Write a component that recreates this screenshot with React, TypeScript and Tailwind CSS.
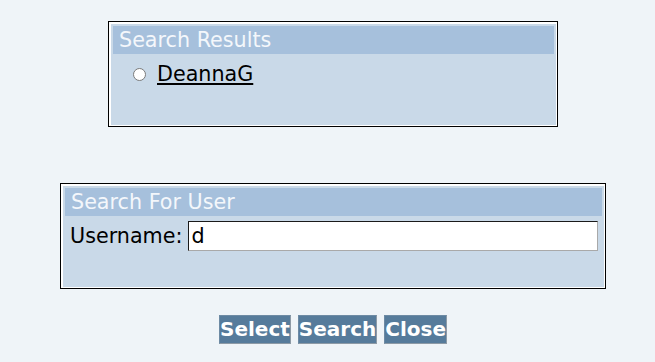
import { useState } from 'react'

const font = { fontFamily: '"DejaVu Sans", Verdana, sans-serif' }

function Header({ title }: { title: string }) {
  return (
    <div className="h-[28px] bg-[#a6c0dc] text-[#f4f7fb] text-[20.7px] leading-[23px] px-[6px] flex items-center">
      {title}
    </div>
  )
}

export default function App() {
  const [username, setUsername] = useState('d')

  return (
    <div className="min-h-[362px] bg-[#eff4f8] text-black pl-[11px]" style={font}>
      <div className="flex flex-col items-center pt-[21px]">
        {/* results */}
        <div className="w-[450px] h-[106px] border border-black bg-white pt-[2px] pl-[2px] pr-px pb-px">
          <div className="h-full bg-[#c9d9e8] p-[2px]">
            <Header title="Search Results" />
            <div className="flex items-center mt-[9px] pl-[20px] text-[20.7px] leading-[23px]">
              <span className="w-[13px] h-[13px] rounded-full border border-[#7a7a7a] bg-white" />
              <a href="#" className="ml-[11px] underline text-black">
                DeannaG
              </a>
            </div>
          </div>
        </div>

        {/* search form */}
        <div className="mt-[56px] w-[546px] h-[106px] border border-black bg-white pt-[2px] pl-[2px] pr-px pb-px">
          <div className="h-full bg-[#c9d9e8] p-[2px]">
            <Header title="Search For User" />
            <div className="flex items-center mt-[5px] pl-[5px] text-[20.7px] leading-[23px]">
              <label htmlFor="username">Username:</label>
              <input
                id="username"
                value={username}
                onChange={(e) => setUsername(e.target.value)}
                className="ml-[6px] w-[410px] h-[30px] bg-white border border-t-[#1a1a1a] border-l-[#1a1a1a] border-r-[#a9a9a9] border-b-[#a9a9a9] px-[2px] text-[20.7px] outline-none"
                style={font}
              />
            </div>
          </div>
        </div>

        {/* buttons */}
        <div className="mt-[26px] flex gap-[7px]">
          {['Select', 'Search', 'Close'].map((label) => (
            <button
              key={label}
              className="bg-[#567b9b] text-white font-bold text-[20px] leading-[23px] py-[2px] px-0 border border-t-[#6d8aa4] border-l-[#6d8aa4] border-r-[#8d9aa6] border-b-[#8d9aa6]"
              style={font}
            >
              {label}
            </button>
          ))}
        </div>
      </div>
    </div>
  )
}
